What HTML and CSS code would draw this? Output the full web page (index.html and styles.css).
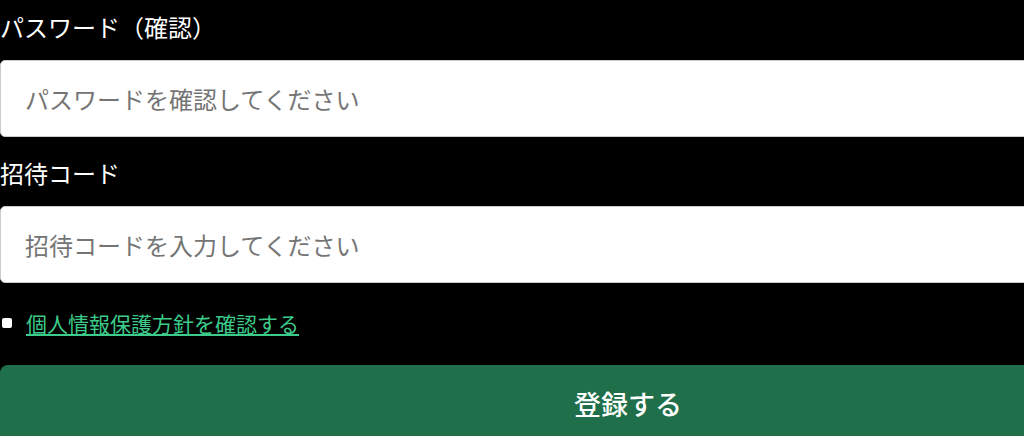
FILE: index.html
```html
<!DOCTYPE html>
<html lang="ja">
<head>
  <meta charset="UTF-8">
  <meta name="viewport" content="width=device-width, initial-scale=1.0">
  <link rel="stylesheet" href="styles.css">
  <title>新規登録</title>
</head>
<body>
  <form class="register-form">
    <div class="form-group">
      <label for="password-confirm">パスワード（確認）</label>
      <input id="password-confirm" type="password" placeholder="パスワードを確認してください">
    </div>
    <div class="form-group">
      <label for="invite-code">招待コード</label>
      <input id="invite-code" type="text" placeholder="招待コードを入力してください">
    </div>
    <div class="privacy-row">
      <input id="privacy" type="checkbox">
      <a href="#" class="privacy-link">個人情報保護方針を確認する</a>
    </div>
    <button type="button" class="submit-button">登録する</button>
  </form>
</body>
</html>
```

FILE: styles.css
```css
html,
body {
  margin: 0;
  padding: 0;
  background-color: #000;
  overflow: hidden;
}

body {
  font-family: "Noto Sans CJK JP", "Noto Sans", sans-serif;
  color: #fff;
}

.register-form {
  width: 1256px;
  padding-top: 9px;
}

.form-group {
  margin-bottom: 18px;
}

.form-group label {
  display: block;
  font-size: 24px;
  line-height: 36px;
  margin-bottom: 15px;
}

.form-group input {
  display: block;
  box-sizing: border-box;
  width: 100%;
  height: 77px;
  padding: 0 24px;
  font-family: inherit;
  font-size: 24px;
  color: #333;
  background-color: #fff;
  border: 1px solid #ccc;
  border-radius: 5px;
}

.form-group input::placeholder {
  color: #757575;
}

.privacy-row {
  display: flex;
  align-items: center;
  gap: 14px;
  height: 44px;
  margin-bottom: 20px;
}

.privacy-row input {
  appearance: none;
  width: 10px;
  height: 10px;
  margin: 0 0 0 2px;
  background-color: #fff;
  border-radius: 2px;
}

.privacy-link {
  font-size: 21px;
  line-height: 30px;
  color: #3ccb8a;
  text-decoration: underline;
}

.submit-button {
  display: block;
  width: 100%;
  height: 80px;
  padding-bottom: 4px;
  font-family: inherit;
  font-size: 27px;
  font-weight: 500;
  color: #fff;
  background-color: #1f6f4b;
  border: none;
  border-radius: 8px;
  cursor: pointer;
}
```
